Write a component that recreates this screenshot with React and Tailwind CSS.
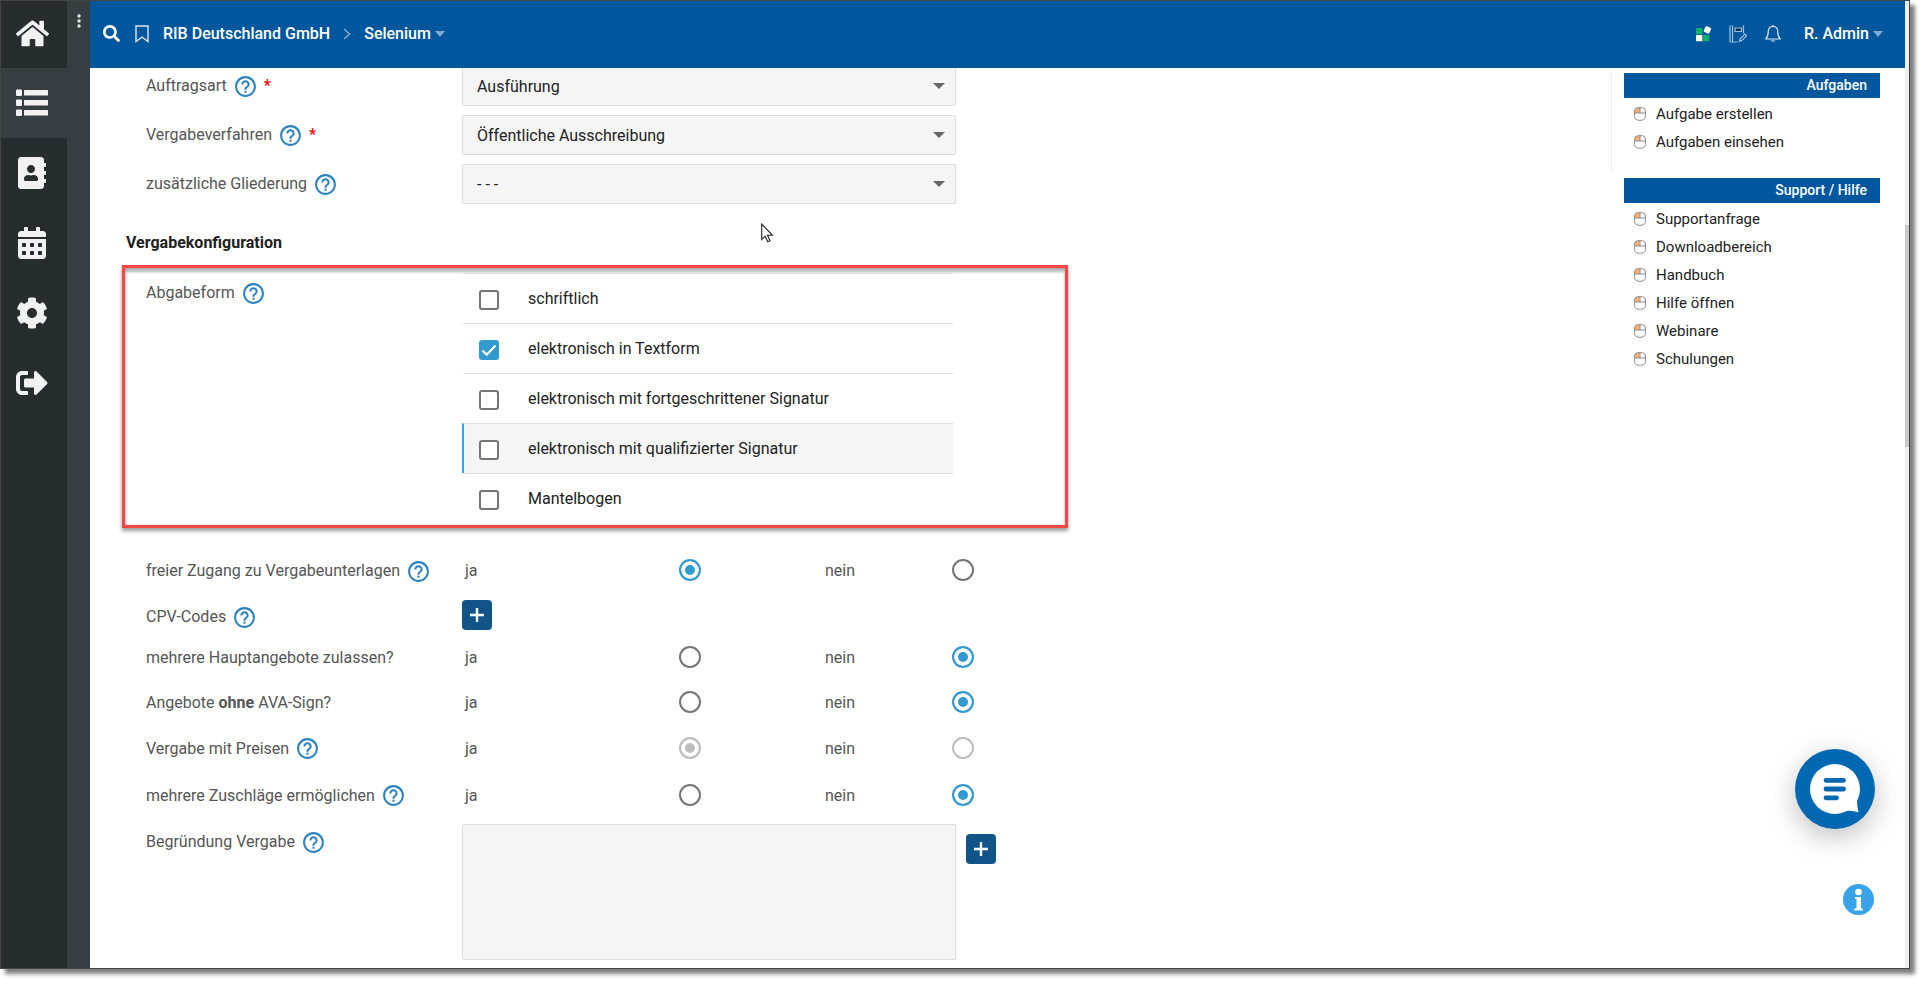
import React from "react";
import { FaHome, FaAddressBook, FaCalendarAlt, FaCog, FaSignOutAlt, FaSearch } from "react-icons/fa";
import { MdHelpOutline } from "react-icons/md";

const ListIcon = () => (
  <svg viewBox="0 0 32 28" width="32" height="28" fill="currentColor" aria-hidden="true">
    {[0, 10, 20].map((y) => (
      <g key={y}>
        <rect x="0" y={y + 0.5} width="6" height="6.5" rx="1" />
        <rect x="8" y={y + 1} width="24" height="5.5" rx="0.5" />
      </g>
    ))}
  </svg>
);

const navItems = [
  { label: "Start", icon: <FaHome size={33} /> },
  { label: "Liste", icon: <ListIcon />, active: true },
  { label: "Kontakte", icon: <FaAddressBook size={32} /> },
  { label: "Kalender", icon: <FaCalendarAlt size={32} /> },
  { label: "Einstellungen", icon: <FaCog size={32} /> },
  { label: "Abmelden", icon: <FaSignOutAlt size={32} /> },
];

function Sidebar() {
  return (
    <div className="flex flex-none">
      <nav className="flex w-[66px] flex-col bg-[#272c2e]">
        {navItems.map((item, i) => (
          <a
            key={item.label}
            href="#"
            aria-label={item.label}
            className={`flex items-center justify-center pr-1 text-[#f1f1f1] ${i === 0 ? "h-[67px] pb-0.5" : "h-[70px]"} ${
              item.active ? "bg-[#373e41]" : ""
            }`}
          >
            {item.icon}
          </a>
        ))}
      </nav>
      <div className="flex w-[23px] justify-center bg-[#373e41] pt-3">
        <button type="button" aria-label="Mehr" className="h-4 text-[#e6e6e6]">
          <svg viewBox="0 0 4 14" width="4" height="14" fill="currentColor">
            <circle cx="2" cy="2" r="1.7" />
            <circle cx="2" cy="7" r="1.7" />
            <circle cx="2" cy="12" r="1.7" />
          </svg>
        </button>
      </div>
    </div>
  );
}

const Caret = () => (
  <svg viewBox="0 0 10 6" width="10" height="6" fill="#7fabd0" aria-hidden="true">
    <path d="M0 0h10L5 6z" />
  </svg>
);

function Header() {
  return (
    <header className="flex h-[67px] flex-none items-center justify-between bg-[#00579d] pr-[22px] pb-0.5 pl-[13px] font-medium text-white">
      <div className="flex items-center">
        <button type="button" aria-label="Suchen">
          <FaSearch size={17} />
        </button>
        <button type="button" aria-label="Lesezeichen" className="ml-[15px]">
          <svg viewBox="0 0 14 18" width="14" height="18" fill="none" stroke="#dce9f4" strokeWidth="1.4">
            <path d="M1 1h12v15.500L7 12l-6 4.500z" />
          </svg>
        </button>
        <a href="#" className="ml-[14px]">RIB Deutschland GmbH</a>
        <svg viewBox="0 0 8 12" width="8" height="12" fill="none" stroke="#7fabd0" strokeWidth="1.6" className="mx-[13px]" aria-hidden="true">
          <path d="M1 1l5.500 5L1 11" />
        </svg>
        <button type="button" className="flex items-center gap-1">
          Selenium
          <Caret />
        </button>
      </div>
      <div className="flex items-center">
        <button type="button" aria-label="Module">
          <svg viewBox="0 0 16 16" width="16" height="16">
            <rect x="0" y="2" width="6.300" height="6.300" rx="0.5" fill="#13b169" />
            <rect x="0" y="9" width="6.300" height="6.300" rx="0.5" fill="#fff" />
            <rect x="7" y="9" width="6.300" height="6.300" rx="0.5" fill="#13b169" />
            <rect x="8.300" y="0.800" width="6.200" height="6.200" rx="1.300" transform="rotate(25 11.400 3.900)" fill="#fff" />
          </svg>
        </button>
        <button type="button" aria-label="Notizen" className="ml-[17px]">
          <svg viewBox="0 0 18 18" width="18" height="18" fill="none" stroke="#9fc0dc" strokeWidth="1.200">
            <path d="M1 0.500v16.500M3.500 17V0.500M14.500 0.500v8M1 17h7.500" />
            <path d="M6 3h6.500v3.500h-6.500z" fill="#0b2f4d" />
            <path d="M10.500 16.500l0.600-2.500 4.900-4.900 1.700 1.600-4.900 4.900z" />
          </svg>
        </button>
        <button type="button" aria-label="Benachrichtigungen" className="ml-[18px]">
          <svg viewBox="0 0 16 18" width="16" height="18" fill="none" stroke="#dce9f4" strokeWidth="1.200">
            <path d="M8 1.300c3 0 4.700 2.100 4.700 4.700 0 4.200 1 6.300 2.500 8H0.800C2.300 12.300 3.300 10.200 3.300 6 3.300 3.400 5 1.300 8 1.300zM8 0v1.300" strokeLinejoin="round" />
            <path d="M5.700 15.200a2.400 2.300 0 0 0 4.600 0z" fill="#9fc0dc" stroke="none" />
          </svg>
        </button>
        <button type="button" className="ml-[23px] flex items-center gap-1">
          R. Admin
          <Caret />
        </button>
      </div>
    </header>
  );
}

const Help = () => (
  <button type="button" aria-label="Hilfe" className="ml-1.5 text-[#2a82c1]">
    <MdHelpOutline size={25} />
  </button>
);

function SelectRow({ id, label, value, help = true, required }) {
  return (
    <div className="flex items-center">
      <div className="flex w-[316px] flex-none items-center">
        <label htmlFor={id}>{label}</label>
        {help && <Help />}
        {required && <span className="ml-1.5 leading-none font-medium text-[#f00]">*</span>}
      </div>
      <div className="relative flex-none">
        <select
          id={id}
          className="h-10 w-[494px] appearance-none rounded-xs border border-[#ddd] bg-[#f5f5f5] pt-0.5 pl-[14px] text-[#222]"
        >
          <option>{value}</option>
        </select>
        <svg viewBox="0 0 12 6" width="12" height="6" fill="#666" className="pointer-events-none absolute top-[17px] right-[11px]">
          <path d="M0 0h12L6 6z" />
        </svg>
      </div>
    </div>
  );
}

const forms = [
  { label: "schriftlich" },
  { label: "elektronisch in Textform", checked: true },
  { label: "elektronisch mit fortgeschrittener Signatur" },
  { label: "elektronisch mit qualifizierter Signatur", hover: true },
  { label: "Mantelbogen" },
];

function CheckRow({ label, checked, hover }) {
  return (
    <label
      className={`flex h-[50px] items-center border-t border-l-2 border-t-[#e0e0e0] text-[#222] ${
        hover ? "border-l-[#38a3e6] bg-[#f5f5f5]" : "border-l-transparent"
      }`}
    >
      <span className="relative ml-[15px] flex pt-[3px]">
        <input
          type="checkbox"
          defaultChecked={checked}
          className="size-5 appearance-none rounded-[3px] border-2 border-[#757575] bg-white checked:border-[#3399d1] checked:bg-[#3399d1]"
        />
        {checked && (
          <svg viewBox="0 0 20 20" width="20" height="20" fill="none" stroke="#fff" strokeWidth="2.200" className="pointer-events-none absolute">
            <path d="M3.500 10.500l4.200 4.200L16.500 5.500" />
          </svg>
        )}
      </span>
      <span className="ml-[29px]">{label}</span>
    </label>
  );
}

const radioClass =
  "mb-0.5 size-[22px] appearance-none rounded-full border-2 border-[#757575] bg-white checked:border-[#3399d1] checked:bg-[#3399d1] checked:shadow-[inset_0_0_0_4px_white] disabled:border-[#bdbdbd] disabled:checked:border-[#bdbdbd] disabled:checked:bg-[#bdbdbd]";

function RadioRow({ name, label, help, value, disabled, height }) {
  return (
    <div role="radiogroup" aria-label={name} className={`flex items-center ${height}`}>
      <div className="flex w-[316px] flex-none items-center">
        <span>{label}</span>
        {help && <Help />}
      </div>
      <label className="flex w-[363px] items-center">
        <span className="w-[217px] pl-[3px]">ja</span>
        <input type="radio" name={name} defaultChecked={value === "ja"} disabled={disabled} className={radioClass} />
      </label>
      <label className="flex items-center">
        <span className="w-[127px]">nein</span>
        <input type="radio" name={name} defaultChecked={value === "nein"} disabled={disabled} className={radioClass} />
      </label>
    </div>
  );
}

function PlusButton({ label, className = "" }) {
  return (
    <button
      type="button"
      aria-label={label}
      className={`flex size-[30px] flex-none items-center justify-center rounded bg-[#115588] ${className}`}
    >
      <svg viewBox="0 0 16 16" width="16" height="16" stroke="#fff" strokeWidth="2.400">
        <path d="M8 1v14M1 8h14" />
      </svg>
    </button>
  );
}

function Form() {
  return (
    <form className="-mt-0.5 min-w-0 flex-1 pl-8 text-[#555]">
      <div className="flex flex-col gap-[9px] pl-6">
        <SelectRow id="auftragsart" label="Auftragsart" value="Ausführung" required />
        <SelectRow id="verfahren" label="Vergabeverfahren" value="Öffentliche Ausschreibung" required />
        <SelectRow id="gliederung" label="zusätzliche Gliederung" value="- - -" />
      </div>
      <h2 className="mt-[27px] pl-1 font-bold text-[#222]">Vergabekonfiguration</h2>
      <fieldset className="mt-2.5 flex w-[946px] border-3 border-[#ff4444] pt-[5px] pb-0.5 pl-[21px] shadow-[0_3px_4px_rgba(0,0,0,0.4),inset_0_4px_3px_rgba(0,0,0,0.28),inset_1px_0_3px_rgba(0,0,0,0.15)]">
        <div className="flex h-10 w-[316px] items-center">
          <span>Abgabeform</span>
          <Help />
        </div>
        <div className="w-[491px]">
          {forms.map((f) => (
            <CheckRow key={f.label} {...f} />
          ))}
        </div>
      </fieldset>
      <div className="mt-5 pl-6">
        <RadioRow name="zugang" label="freier Zugang zu Vergabeunterlagen" help value="ja" height="h-[46px]" />
        <div className="flex h-[42px] items-center">
          <div className="flex w-[316px] items-center pt-1">
            <span>CPV-Codes</span>
            <Help />
          </div>
          <PlusButton label="CPV-Code hinzufügen" />
        </div>
        <RadioRow name="haupt" label="mehrere Hauptangebote zulassen?" value="nein" height="h-[44px]" />
        <RadioRow
          name="ava"
          label={
            <>
              Angebote <b>ohne</b> AVA-Sign?
            </>
          }
          value="nein"
          height="h-[46px]"
        />
        <RadioRow name="preise" label="Vergabe mit Preisen" help value="ja" disabled height="h-[45px]" />
        <RadioRow name="zuschlag" label="mehrere Zuschläge ermöglichen" help value="nein" height="h-[49px]" />
        <div className="flex pt-1">
          <div className="flex h-9 w-[316px] items-center">
            <label htmlFor="begruendung">Begründung Vergabe</label>
            <Help />
          </div>
          <textarea
            id="begruendung"
            className="h-[136px] w-[494px] resize-none rounded-xs border border-[#ddd] bg-[#f5f5f5] p-3"
          />
          <PlusButton label="Begründung hinzufügen" className="mt-2.5 ml-2.5" />
        </div>
      </div>
    </form>
  );
}

const MouseIcon = () => (
  <svg viewBox="0 0 12 14" width="12" height="14" fill="none" aria-hidden="true">
    <path d="M0.800 6V4Q0.800 0.800 4 0.800h2V6z" fill="#fbb27a" />
    <path d="M3.700 0.700h4.600Q11.400 0.700 11.400 4v5.300Q11.400 13.300 6 13.300T0.600 9.300V4Q0.600 0.700 3.700 0.700zM0.600 6h10.800M6 0.700V6" stroke="#8a8a8a" />
  </svg>
);

function Panel({ title, items }) {
  return (
    <section>
      <h3 className="h-[25px] bg-[#00579d] pr-[13px] text-right text-sm leading-[25px] font-medium text-white">{title}</h3>
      <ul className="pt-0.5">
        {items.map((t) => (
          <li key={t}>
            <a href="#" className="flex h-7 items-center gap-2.5 pl-2.5 text-[15px] text-[#222]">
              <MouseIcon />
              {t}
            </a>
          </li>
        ))}
      </ul>
    </section>
  );
}

function Aside() {
  return (
    <aside className="mt-[5px] mr-[25px] flex w-[269px] flex-none flex-col">
      <div className="h-[97px] border-l border-[#eee] pl-3">
        <Panel title="Aufgaben" items={["Aufgabe erstellen", "Aufgaben einsehen"]} />
      </div>
      <div className="mt-2 pl-[13px]">
        <Panel
          title="Support / Hilfe"
          items={["Supportanfrage", "Downloadbereich", "Handbuch", "Hilfe öffnen", "Webinare", "Schulungen"]}
        />
      </div>
    </aside>
  );
}

export default function App() {
  return (
    <div className="h-screen overflow-hidden bg-white pr-[15px] pb-[15px] font-[Roboto,sans-serif] text-base">
      <div className="relative flex h-full border border-[#444] bg-white shadow-[5px_5px_4px_rgba(0,0,0,0.5)]">
        <Sidebar />
        <div className="flex min-w-0 flex-1 flex-col">
          <Header />
          <main className="flex min-h-0 flex-1 overflow-hidden">
            <Form />
            <Aside />
          </main>
        </div>
        <div className="w-1 flex-none bg-[#f0f0f0] pt-56">
          <div className="h-[222px] bg-[#c8c8c8]" />
        </div>

        <button
          type="button"
          aria-label="Chat"
          className="absolute right-[34px] bottom-[139px] size-20 rounded-full bg-[#0067b3] shadow-[0_8px_28px_rgba(0,0,0,0.25)]"
        >
          <svg viewBox="0 0 80 80" width="80" height="80">
            <circle cx="40" cy="40" r="25" fill="#fff" />
            <path d="M62 50Q61.800 57 63.500 63.300Q57 61.200 51 62z" fill="#fff" />
            <path d="M31 31.300h17.500M31 40h17.500M31 48.800h10.500" stroke="#0067b3" strokeWidth="4.800" strokeLinecap="round" />
          </svg>
        </button>
        <button type="button" aria-label="Information" className="absolute right-[35px] bottom-[53px] size-[31px]">
          <svg viewBox="0 0 31 31" width="31" height="31">
            <circle cx="15.500" cy="15.500" r="15.500" fill="#38a3e6" />
            <circle cx="15.500" cy="8" r="3.300" fill="#fff" />
            <path d="M12 13h6v11.500h1.800v2h-8.600v-2H13.500V15H12z" fill="#fff" />
          </svg>
        </button>
        <svg viewBox="0 0 13 20" width="13" height="20" className="pointer-events-none absolute top-[222px] left-[760px]">
          <path d="M0.700 1v15.500l3.500-3.300 2.500 5.600 2.300-1-2.500-5.500h4.900z" fill="#fff" stroke="#222" strokeWidth="1.100" />
        </svg>
      </div>
    </div>
  );
}
